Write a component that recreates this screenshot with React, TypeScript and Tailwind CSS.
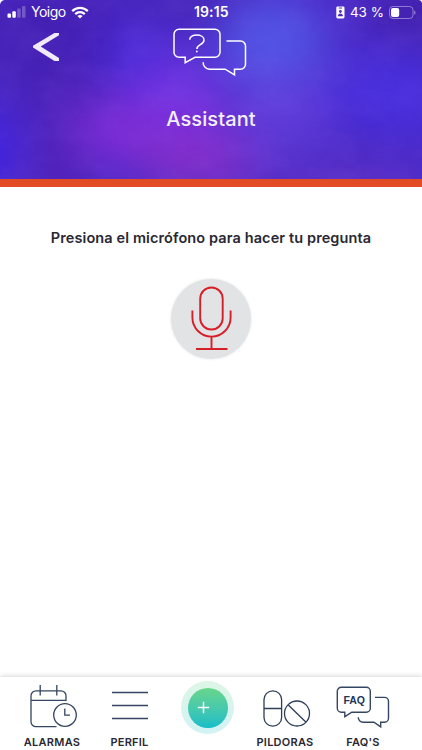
import type { ReactNode } from "react";

function HeaderArtwork() {
  return (
    <svg
      className="absolute inset-0 h-full w-full"
      viewBox="0 0 422 179"
      preserveAspectRatio="none"
      aria-hidden="true"
    >
      <defs>
        <filter id="soft" x="-80%" y="-80%" width="260%" height="260%" colorInterpolationFilters="sRGB">
          <feGaussianBlur stdDeviation="22" />
        </filter>
        <filter id="clouds" x="0" y="0" width="100%" height="100%" colorInterpolationFilters="sRGB">
          <feTurbulence type="fractalNoise" baseFrequency="0.025 0.035" numOctaves="5" seed="3" />
          <feColorMatrix values="0 0 0 0 0.62  0 0 0 0 0.45  0 0 0 0 1  1.5 0 0 0 -0.55" />
        </filter>
      </defs>
      <rect width="422" height="179" fill="#4b2ac6" />
      <g filter="url(#soft)">
        <ellipse cx="55" cy="35" rx="85" ry="60" fill="#4420b4" />
        <ellipse cx="60" cy="115" rx="35" ry="45" fill="#4c22b8" />
        <ellipse cx="-15" cy="150" rx="30" ry="40" fill="#3f22e6" />
        <ellipse cx="135" cy="55" rx="32" ry="34" fill="#4b2cdc" />
        <ellipse cx="185" cy="0" rx="55" ry="20" fill="#4525b4" />
        <ellipse cx="272" cy="42" rx="55" ry="46" fill="#5254e4" />
        <ellipse cx="285" cy="115" rx="55" ry="38" fill="#603cd8" />
        <ellipse cx="390" cy="95" rx="62" ry="45" fill="#482fdc" />
        <ellipse cx="420" cy="12" rx="55" ry="32" fill="#4220ac" />
        <ellipse cx="150" cy="130" rx="82" ry="38" fill="#7e2cd4" />
        <ellipse cx="178" cy="88" rx="46" ry="28" fill="#7234e2" />
        <ellipse cx="200" cy="165" rx="60" ry="26" fill="#8430c8" />
        <ellipse cx="60" cy="178" rx="34" ry="24" fill="#5220b6" />
        <ellipse cx="355" cy="143" rx="34" ry="16" fill="#4725be" />
        <ellipse cx="345" cy="190" rx="85" ry="18" fill="#6434c8" />
      </g>
      <rect width="422" height="179" filter="url(#clouds)" opacity="0.12" />
      <path d="M0 0h4.5Q.8.8 0 4.5ZM422 0h-3q2.6.4 3 3Z" fill="#fff" />
    </svg>
  );
}

function StatusBar() {
  return (
    <div className="flex h-6 items-center pl-[7px] pr-[6px] text-white">
      <div className="flex w-[187px] items-center">
        <svg width="19" height="12" viewBox="0 0 19 12" fill="currentColor">
          <rect x="0.5" y="7.5" width="3.5" height="4.3" rx="1" />
          <rect x="5.3" y="5.3" width="3.5" height="6.5" rx="1" />
          <rect x="10.2" y="2.6" width="3.5" height="9.2" rx="1" opacity="0.25" />
          <rect x="15" y="0" width="3.5" height="11.8" rx="1" opacity="0.25" />
        </svg>
        <span className="ml-[5px] w-[35px] text-[14px] leading-6 tracking-[-0.5px]">Yoigo</span>
        <svg className="ml-[5px]" width="18" height="13" viewBox="0 0 18 13" fill="none" stroke="currentColor" strokeWidth="2.2">
          <path d="M1.2 5.1C5.6 .8 12.4 .8 16.8 5.1" />
          <path d="M4.2 8.1c2.7-2.6 6.9-2.6 9.6 0" />
          <path d="M6.4 9.9 9 12.5l2.6-2.6c-1.5-1.3-3.7-1.3-5.2 0Z" fill="currentColor" stroke="none" />
        </svg>
      </div>
      <span className="text-[14px] font-semibold leading-6 tracking-[0.1px]">19:15</span>
      <div className="ml-auto flex items-center">
        <svg width="9" height="13" viewBox="0 0 9 13">
          <rect x="0.3" y="0.4" width="8.2" height="12" rx="1.4" fill="#fff" />
          <rect x="2.7" y="1.5" width="3.4" height="1" rx="0.5" fill="#4b2bc1" />
          <circle cx="4.4" cy="5.5" r="1.4" fill="#4b2bc1" />
          <path d="M1.8 10.3c.2-3.6 5-3.6 5.2 0Z" fill="#4b2bc1" />
        </svg>
        <span className="ml-[5px] text-[13.5px] leading-6">43 %</span>
        <svg className="ml-[5px]" width="27" height="13" viewBox="0 0 27 13">
          <rect x="0.5" y="0.5" width="23.5" height="12" rx="3.4" fill="none" stroke="#fff" strokeOpacity="0.4" />
          <rect x="2" y="2" width="8.2" height="9" rx="2" fill="#fff" />
          <path d="M25.2 4.4c1.8.6 1.8 3.6 0 4.2Z" fill="#fff" opacity="0.45" />
        </svg>
      </div>
    </div>
  );
}

function ChatIcon() {
  return (
    <svg width="76" height="50" viewBox="0 0 76 50" fill="none" stroke="#fff" strokeWidth="1.5">
      <path d="M12.7 30.3H7a5 5 0 0 1-5-5V7.2a5 5 0 0 1 5-5h36a5 5 0 0 1 5 5v18.1a5 5 0 0 1-5 5H23l-9.8 5.4v-5.4Z" />
      <path d="M54.5 14h14a5 5 0 0 1 5 5v18.2a5 5 0 0 1-5 5h-6v5.6l-9.3-5.6H37.5a6.5 6.5 0 0 1-6.3-7" />
      <path d="M17.7 12.7c0-6.2 14.3-6.2 14.3.2 0 5-7.1 4.5-7.1 9" />
      <circle cx="24.8" cy="24.5" r="0.9" fill="#fff" stroke="none" />
    </svg>
  );
}

function Header() {
  return (
    <header className="relative h-[187px] overflow-hidden border-b-8 border-[#e14b26] bg-[#4b2bc7]">
      <HeaderArtwork />
      <div className="relative">
        <StatusBar />
        <div className="flex items-start pl-8 pt-[3px]">
          <button className="mt-[5px] w-[140px]" aria-label="Volver">
            <svg width="28" height="30" viewBox="0 0 28 30">
              <path d="M22.5 1H27v2.2L8.7 14.5 27 26v3h-4.5L1 15.6v-1.8Z" fill="#f1eafb" />
            </svg>
          </button>
          <ChatIcon />
        </div>
        <h1 className="mt-[27px] text-center text-[20px] font-medium leading-[30px] tracking-[0.1px] text-[#f4effd]">
          Assistant
        </h1>
      </div>
    </header>
  );
}

function MicButton() {
  return (
    <button
      className="flex h-20 w-20 items-center justify-center rounded-full bg-[#e2e3e5] shadow-[0_0_3px_#e2e3e5]"
      aria-label="Micrófono"
    >
      <svg width="80" height="80" viewBox="0 0 80 80" fill="none" stroke="#d71f29" strokeWidth="1.9">
        <rect x="29.2" y="8.5" width="22.5" height="42" rx="11.2" />
        <path d="M21.4 31.5v7a19.1 19.1 0 0 0 38.2 0v-7M40.5 57.6v12M25 70h31.5" />
      </svg>
    </button>
  );
}

function CalendarIcon() {
  return (
    <svg width="48" height="43" viewBox="0 0 48 43" fill="none" stroke="#344661" strokeWidth="1.3">
      <path d="M26.5 41.7H6a5 5 0 0 1-5-5V10.8a5 5 0 0 1 5-5h25a5 5 0 0 1 5 5v4.5H1M10.2 0v10.5M26.8 0v10.5" />
      <circle cx="35" cy="30" r="11.3" />
      <path d="M34.8 23.6v6.5h5.2" />
    </svg>
  );
}

function MenuIcon() {
  return (
    <svg width="36" height="30" viewBox="0 0 36 30" stroke="#344661" strokeWidth="1.3">
      <path d="M0 1.5h36M0 14.5h36M0 27.5h36" />
    </svg>
  );
}

function PillsIcon() {
  return (
    <svg width="48" height="38" viewBox="0 0 48 38" fill="none" stroke="#2c3e58" strokeWidth="1.3">
      <rect x="1" y="0.8" width="17.6" height="35.4" rx="8.8" />
      <path d="M1 18.5h17.6M25.3 15l17.5 17" />
      <circle cx="34" cy="23.5" r="12.5" />
    </svg>
  );
}

function FaqIcon() {
  return (
    <svg width="54" height="43" viewBox="0 0 54 43" fill="none" stroke="#344661" strokeWidth="1.4">
      <path d="M8.6 26.2H5.3a4 4 0 0 1-4-4V5.3a4 4 0 0 1 4-4h25a4 4 0 0 1 4 4v16.9a4 4 0 0 1-4 4H15.8l-7 4.5v-4.5Z" />
      <path d="M39 11.4h9.5a4 4 0 0 1 4 4v16.8a4 4 0 0 1-4 4h-3.8v4.7l-6.8-4.7H27a4.7 4.7 0 0 1-4.7-5" />
      <text
        x="18.2"
        y="17.6"
        textAnchor="middle"
        fill="#1c365c"
        stroke="none"
        className="font-['Liberation_Sans',sans-serif] text-[10.5px] font-bold"
      >
        FAQ
      </text>
    </svg>
  );
}

interface NavItemProps {
  label: string;
  className: string;
  children: ReactNode;
}

function NavItem({ label, className, children }: NavItemProps) {
  return (
    <button className={`flex h-[73px] shrink-0 flex-col items-center ${className}`}>
      {children}
      <span className="mt-auto whitespace-nowrap text-[11px] font-semibold leading-4 tracking-[0.25px] text-[#292833]">
        {label}
      </span>
    </button>
  );
}

function BottomNav() {
  return (
    <nav className="flex h-[73px] bg-white pl-[23px] shadow-[0_-1px_5px_rgba(0,0,0,0.16)]">
      <NavItem label="ALARMAS" className="w-[58px] pt-[8px]">
        <div className="pl-[3px]">
          <CalendarIcon />
        </div>
      </NavItem>
      <NavItem label="PERFIL" className="ml-[28px] w-[41px] pt-[14px]">
        <div className="pl-px">
          <MenuIcon />
        </div>
      </NavItem>
      <button
        className="ml-[31px] mt-[4px] flex h-[53px] w-[53px] shrink-0 items-center justify-center rounded-full bg-linear-to-b from-[#dcf6e5] to-[#d3f2f5]"
        aria-label="Añadir"
      >
        <span className="flex h-10 w-10 items-center rounded-full bg-linear-to-b from-[#68d58a] to-[#12bdc8] pl-[9px]">
          <svg width="13" height="13" viewBox="0 0 13 13" stroke="#fff" strokeWidth="1.5">
            <path d="M6.5 .8v11.4M.8 6.5h11.4" />
          </svg>
        </span>
      </button>
      <NavItem label="PILDORAS" className="ml-[20px] w-[62px] pt-[13px]">
        <div className="pl-[4px]">
          <PillsIcon />
        </div>
      </NavItem>
      <NavItem label="FAQ'S" className="ml-[20px] w-[54px] pt-[9px]">
        <FaqIcon />
      </NavItem>
    </nav>
  );
}

export default function App() {
  return (
    <div className="flex h-[750px] w-[422px] flex-col overflow-hidden bg-white font-['Inter',sans-serif]">
      <Header />
      <main className="flex flex-1 flex-col items-center">
        <p className="mt-[39px] whitespace-nowrap text-[14.5px] font-semibold leading-6 tracking-[0.11px] text-[#292833]">
          Presiona el micrófono para hacer tu pregunta
        </p>
        <div className="mt-[29px]">
          <MicButton />
        </div>
      </main>
      <BottomNav />
    </div>
  );
}
